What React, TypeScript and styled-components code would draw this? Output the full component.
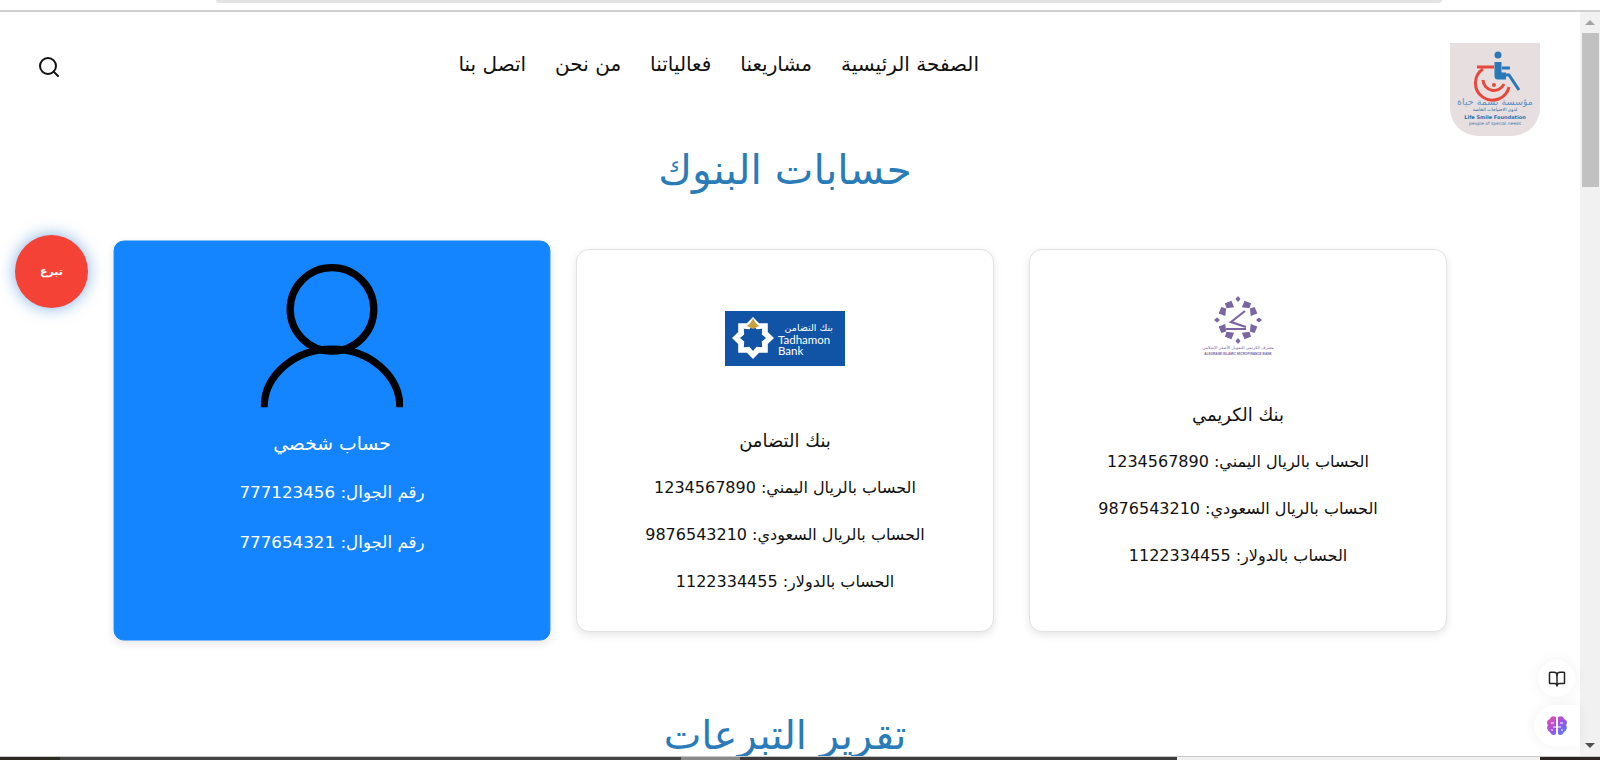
import styled, { createGlobalStyle } from 'styled-components';
import { Search, BookOpen } from 'lucide-react';

const GlobalStyle = createGlobalStyle`
  html, body {
    margin: 0;
    padding: 0;
    height: 760px;
    overflow: hidden;
    background: #fff;
  }
  * { box-sizing: border-box; }
`;

const Shell = styled.div`
  width: 1600px;
  height: 760px;
  display: flex;
  flex-direction: column;
  overflow: hidden;
  font-family: 'DejaVu Sans', 'Noto Sans', sans-serif;
`;

const BrowserTop = styled.div`
  height: 12px;
  flex: none;
  background: #fff;
  border-bottom: 2px solid #d0d0d0;
  display: flex;
  justify-content: flex-start;
  padding-left: 216px;
`;

const AddressBar = styled.div`
  width: 1226px;
  height: 3px;
  background: #e4e4e4;
  border-radius: 0 0 10px 10px;
`;

const Viewport = styled.div`
  flex: 1;
  min-height: 0;
  display: flex;
  position: relative;
`;

const Page = styled.main`
  flex: 1;
  min-width: 0;
  overflow: hidden;
`;

const Header = styled.header`
  direction: rtl;
  height: 128px;
  display: flex;
  align-items: flex-start;
  padding: 31px 40px 0 37px;
`;

const LogoBox = styled.div`
  width: 90px;
  height: 93px;
  flex: none;
  background: #e7dfdf;
  border-radius: 0 0 28px 28px;
`;

const Nav = styled.nav`
  display: flex;
  gap: 29px;
  margin-right: 471px;
  padding-top: 8px;
  flex: 1;
`;

const NavLink = styled.a`
  font-size: 20px;
  line-height: 26px;
  color: #111;
`;

const SearchButton = styled.div`
  padding-top: 12px;
  color: #111;
`;

const Title = styled.h1`
  direction: rtl;
  margin: 0;
  text-align: center;
  font-weight: 400;
  font-size: 41px;
  line-height: 60px;
  color: #2a7cb8;
  padding-right: 10px;
`;

const Cards = styled.section`
  direction: rtl;
  display: grid;
  grid-template-columns: repeat(3, 418px);
  gap: 35px;
  padding: 49px 133px 0 123px;
`;

const Card = styled.article<{ $active?: boolean }>`
  height: 383px;
  border-radius: ${(p) => (p.$active ? '10px' : '13px')};
  padding: 21px 20px 0;
  text-align: center;
  background: ${(p) => (p.$active ? '#1485ff' : '#fff')};
  color: ${(p) => (p.$active ? '#fff' : '#111')};
  border: 1px solid ${(p) => (p.$active ? '#1485ff' : '#e2e2e2')};
  box-shadow: 0 3px 8px rgba(0, 0, 0, 0.1);
  transform: ${(p) => (p.$active ? 'scale(1.045)' : 'none')};
`;

const CardImage = styled.div<{ $height: number }>`
  height: ${(p) => p.$height}px;
  display: flex;
  align-items: center;
  justify-content: center;
`;

const CardName = styled.h3`
  margin: 22px 0 0;
  font-weight: 400;
  font-size: 18px;
  line-height: 26px;
`;

const CardLine = styled.p`
  margin: 21px 0 0;
  font-size: 16px;
  line-height: 26px;
`;

const SecondTitle = styled(Title)`
  margin-top: 73px;
  font-size: 40px;
`;

const Scrollbar = styled.div`
  width: 20px;
  flex: none;
  background: #f1f1f1;
  display: flex;
  flex-direction: column;
  align-items: center;
`;

const ScrollArrow = styled.div<{ $down?: boolean }>`
  height: 21px;
  flex: none;
  display: flex;
  align-items: center;
  justify-content: center;
  &::before {
    content: '';
    border-left: 5px solid transparent;
    border-right: 5px solid transparent;
    ${(p) => (p.$down ? 'border-top: 5px solid #505050;' : 'border-bottom: 5px solid #a3a3a3;')}
  }
`;

const ScrollThumb = styled.div`
  width: 17px;
  height: 154px;
  background: #c1c1c1;
`;

const ScrollSpace = styled.div`
  flex: 1;
`;

const DonateButton = styled.button`
  position: absolute;
  left: 15px;
  top: 223px;
  width: 73px;
  height: 73px;
  border: 0;
  padding: 0;
  border-radius: 50%;
  background: #f44336;
  color: #fff;
  font: 700 11px 'DejaVu Sans', sans-serif;
  box-shadow: 0 0 16px rgba(20, 110, 200, 0.55);
`;

const FloatBook = styled.div`
  position: absolute;
  left: 1538px;
  top: 648px;
  width: 37px;
  height: 37px;
  border-radius: 50%;
  background: #fff;
  box-shadow: 0 0 14px rgba(0, 0, 0, 0.06);
  display: flex;
  align-items: center;
  justify-content: center;
  color: #222;
`;

const FloatBrain = styled.div`
  position: absolute;
  left: 1534px;
  top: 693px;
  width: 46px;
  height: 41px;
  border-radius: 21px 0 0 21px;
  background: #fff;
  box-shadow: 0 0 14px rgba(0, 0, 0, 0.06);
  display: flex;
  align-items: center;
  padding-left: 11px;
`;

const Taskbar = styled.div`
  height: 4px;
  flex: none;
  display: flex;
  border-top: 1px solid #c8c8c8;
`;

const TaskSlot = styled.div<{ $width: number; $color: string }>`
  width: ${(p) => p.$width}px;
  background: ${(p) => p.$color};
`;

const starPoints = (cx: number, cy: number, outer: number, inner: number, n: number) =>
  Array.from({ length: n * 2 }, (_, i) => {
    const r = i % 2 === 0 ? outer : inner;
    const a = (Math.PI * i) / n;
    return `${(cx + r * Math.sin(a)).toFixed(1)},${(cy - r * Math.cos(a)).toFixed(1)}`;
  }).join(' ');

const WheelchairLogo = () => (
  <svg width="90" height="93" viewBox="0 0 90 93">
    <circle cx="48" cy="12" r="3.5" fill="#2a78b8" />
    <path d="M48 19v14h8" fill="none" stroke="#2a78b8" strokeWidth="7" strokeLinejoin="round" />
    <path d="M52 25h8M56 32h3l10 15" fill="none" stroke="#2a78b8" strokeWidth="3" />
    <path d="M27 24h17" stroke="#e8473b" strokeWidth="3" />
    <path d="M33 26a17 17 0 1 0 26 18" fill="none" stroke="#e8473b" strokeWidth="3" />
    <path d="M33 37a11 11 0 0 0 21 4" fill="none" stroke="#e8473b" strokeWidth="3" />
    <circle cx="44" cy="42" r="2" fill="#e8473b" />
    <text x="45" y="62" textAnchor="middle" fontSize="9.5" fill="#5a93c8" direction="rtl">مؤسسة بسمة حياة</text>
    <text x="45" y="68" textAnchor="middle" fontSize="4.5" fill="#2a5f95" direction="rtl">لذوي الاحتياجات الخاصة</text>
    <text x="45" y="76" textAnchor="middle" fontSize="5" fontWeight="700" fill="#2a6cae" direction="ltr">Life Smile Foundation</text>
    <text x="45" y="82" textAnchor="middle" fontSize="4.4" fill="#4a78aa" direction="ltr">people of special needs</text>
  </svg>
);

const KuraimiLogo = () => (
  <svg width="78" height="72" viewBox="0 0 78 72">
    <g fill="#7a66a3" transform="translate(39 30)">
      {Array.from({ length: 12 }, (_, i) =>
        i % 3 === 0 ? (
          <path key={i} d="M0 -24l2.5 3 -2.5 3 -2.5 -3z" transform={`rotate(${i * 30})`} />
        ) : (
          <path
            key={i}
            d={i % 3 === 1 ? 'M-4 -20l7 -1 1 5 -7 3z' : 'M4 -20l-7 -1 -1 5 7 3z'}
            transform={`rotate(${i * 30})`}
          />
        ),
      )}
    </g>
    <path d="M46 21l-14 11 15 5M27 39h20" fill="none" stroke="#7a66a3" strokeWidth="2.2" />
    <text x="39" y="59" textAnchor="middle" fontSize="4.2" fill="#7a66a3" direction="rtl">مصرف الكريمي للتمويل الأصغر الإسلامي</text>
    <text x="39" y="65" textAnchor="middle" fontSize="3.2" fontWeight="700" fill="#7a66a3" fontFamily="Liberation Sans, sans-serif" direction="ltr">ALKURAIMI ISLAMIC MICROFINANCE BANK</text>
  </svg>
);

const TadhamonLogo = () => (
  <svg width="120" height="55" viewBox="0 0 120 55">
    <rect width="120" height="55" fill="#1153a5" />
    <polygon points={starPoints(28, 27, 21, 16, 8)} fill="#fff" />
    <polygon points={starPoints(28, 27, 13, 9.5, 8)} fill="#1153a5" />
    <path d="M22 15c2-2 4-3 6-8 2 5 4 6 6 8l-6 3z" fill="#c9a13f" />
    <text x="108" y="20" fontSize="9.5" fill="#fff" direction="rtl">بنك التضامن</text>
    <text x="53" y="33" fontSize="11.5" fill="#fff" fontFamily="Lato, sans-serif" direction="ltr">Tadhamon</text>
    <text x="53" y="44" fontSize="11.5" fill="#fff" fontFamily="Lato, sans-serif" direction="ltr">Bank</text>
  </svg>
);

const PersonIcon = () => (
  <svg width="136" height="138" viewBox="0 0 136 138">
    <circle cx="68" cy="44" r="40" fill="none" stroke="#000" strokeWidth="7" />
    <path d="M3 138a65 56 0 0 1 130 0" fill="none" stroke="#000" strokeWidth="7" />
  </svg>
);

const BrainIcon = () => (
  <svg width="24" height="24" viewBox="0 0 24 24">
    <defs>
      <linearGradient id="brain" x1="0" y1="0" x2="1" y2="1">
        <stop offset="0" stopColor="#f0529c" />
        <stop offset="0.5" stopColor="#a04fe8" />
        <stop offset="1" stopColor="#3f8cf5" />
      </linearGradient>
    </defs>
    <path
      fill="url(#brain)"
      d="M11 3c-3-2-6 0-6 2-3 1-4 4-2 6-2 3 0 6 2 7 1 3 4 4 6 2zM13 3c3-2 6 0 6 2 3 1 4 4 2 6 2 3 0 6-2 7-1 3-4 4-6 2z"
    />
    <path d="M6 9h3M8 13h3M6 16h2M15 9h3M13 13h3M16 16h2" stroke="#fff" strokeWidth="1" fill="none" />
  </svg>
);

const banks = [
  { name: 'بنك الكريمي', logo: <KuraimiLogo />, height: 109 },
  { name: 'بنك التضامن', logo: <TadhamonLogo />, height: 135 },
];

const accounts = [
  'الحساب بالريال اليمني: 1234567890',
  'الحساب بالريال السعودي: 9876543210',
  'الحساب بالدولار: 1122334455',
];

const taskSlots = [
  { width: 60, color: '#2a2a22' },
  { width: 621, color: '#444444' },
  { width: 59, color: '#8a8a8a' },
  { width: 437, color: '#3c3c3c' },
  { width: 363, color: '#f0f0f0' },
  { width: 60, color: '#2b2420' },
];

const App = () => (
  <Shell>
    <GlobalStyle />
    <BrowserTop>
      <AddressBar />
    </BrowserTop>
    <Viewport>
      <Page>
        <Header>
          <LogoBox>
            <WheelchairLogo />
          </LogoBox>
          <Nav>
            <NavLink>الصفحة الرئيسية</NavLink>
            <NavLink>مشاريعنا</NavLink>
            <NavLink>فعالياتنا</NavLink>
            <NavLink>من نحن</NavLink>
            <NavLink>اتصل بنا</NavLink>
          </Nav>
          <SearchButton>
            <Search size={24} strokeWidth={2} />
          </SearchButton>
        </Header>
        <Title>حسابات البنوك</Title>
        <Cards>
          {banks.map((bank) => (
            <Card key={bank.name}>
              <CardImage $height={bank.height}>{bank.logo}</CardImage>
              <CardName>{bank.name}</CardName>
              {accounts.map((line) => (
                <CardLine key={line}>{line}</CardLine>
              ))}
            </Card>
          ))}
          <Card $active>
            <CardImage $height={138}>
              <PersonIcon />
            </CardImage>
            <CardName>حساب شخصي</CardName>
            <CardLine>رقم الجوال: 777123456</CardLine>
            <CardLine>رقم الجوال: 777654321</CardLine>
          </Card>
        </Cards>
        <SecondTitle>تقرير التبرعات</SecondTitle>
      </Page>
      <Scrollbar>
        <ScrollArrow />
        <ScrollThumb />
        <ScrollSpace />
        <ScrollArrow $down />
      </Scrollbar>
      <DonateButton>تبرع</DonateButton>
      <FloatBook>
        <BookOpen size={18} />
      </FloatBook>
      <FloatBrain>
        <BrainIcon />
      </FloatBrain>
    </Viewport>
    <Taskbar>
      {taskSlots.map((slot) => (
        <TaskSlot key={slot.width} $width={slot.width} $color={slot.color} />
      ))}
    </Taskbar>
  </Shell>
);

export default App;
